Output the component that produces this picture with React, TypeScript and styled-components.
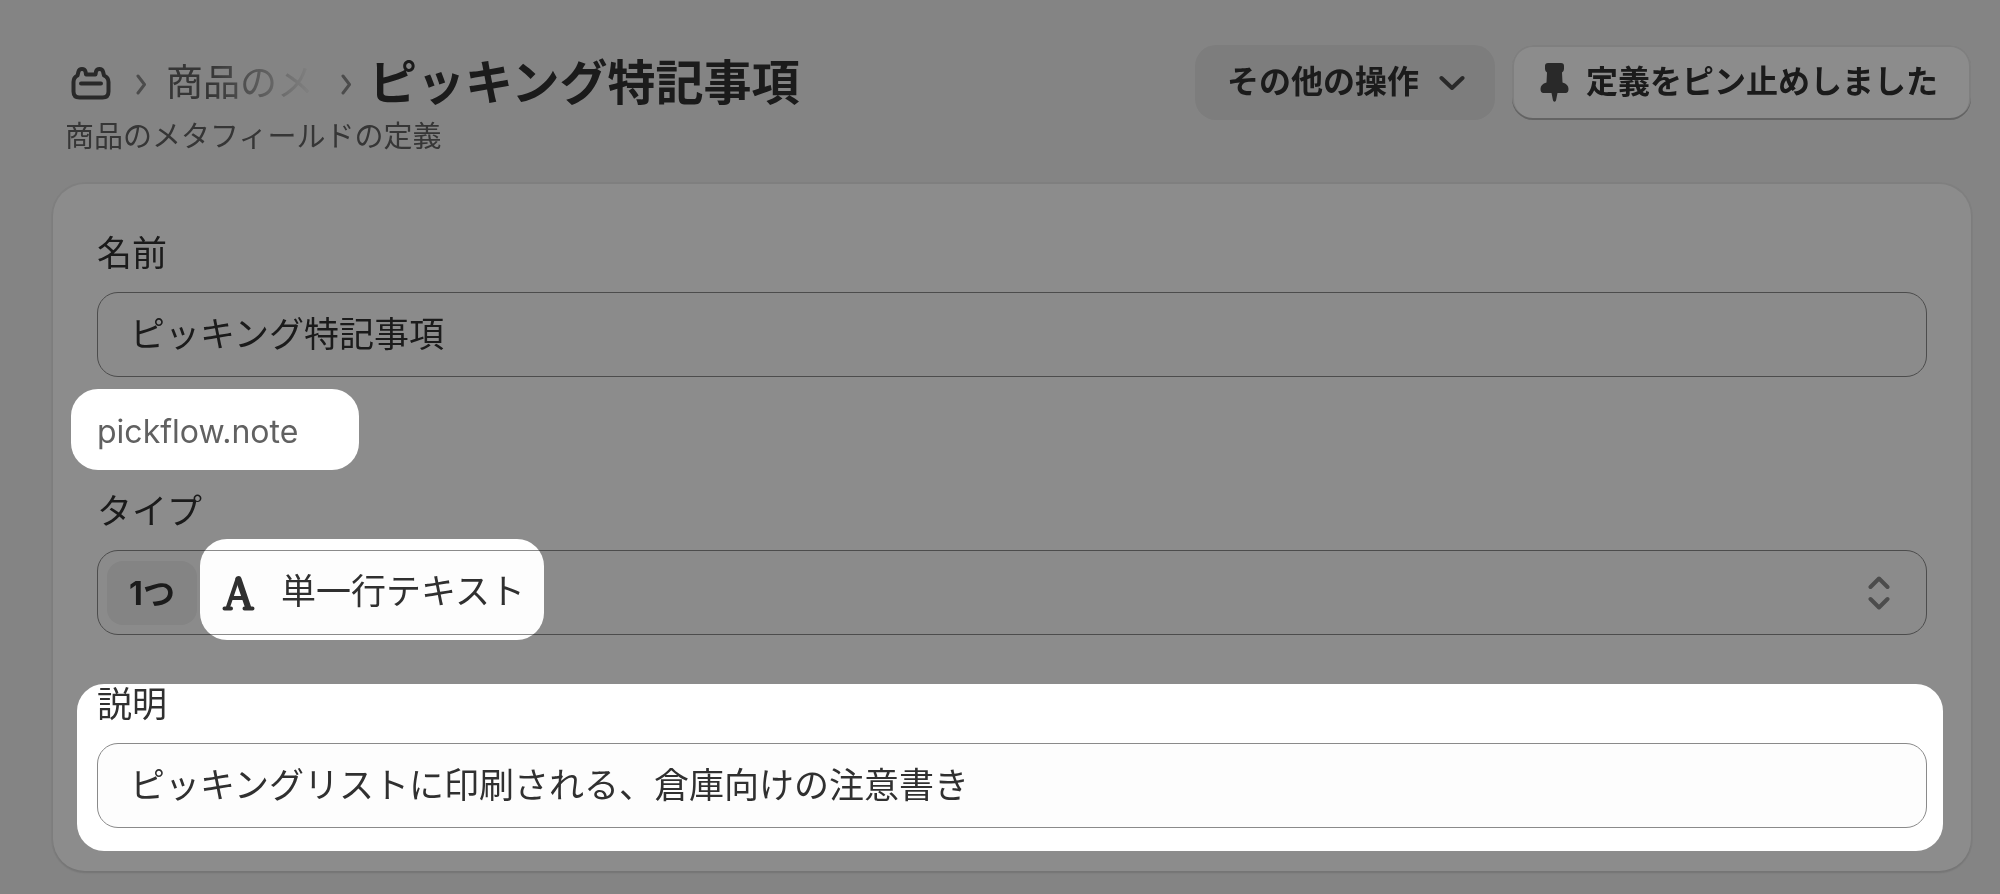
import React from "react";
import styled, { createGlobalStyle } from "styled-components";

const GlobalStyle = createGlobalStyle`
  * { box-sizing: border-box; }
  body {
    margin: 0;
    background: #858585;
    color: #303030;
    font-family: Inter, "Noto Sans CJK JP", sans-serif;
  }
  button, input, select { font: inherit; color: inherit; }
`;

const Page = styled.main`
  position: relative;
  min-height: 100vh;
  background: #f1f1f1;
  padding: 45px 29px 23px 53px;
`;

const Header = styled.header`
  display: flex;
  justify-content: space-between;
  align-items: flex-start;
  min-height: 139px;
`;

const Heading = styled.div`
  padding-left: 12px;
`;

const Breadcrumbs = styled.nav`
  display: flex;
  align-items: center;
  height: 75px;
  color: #616161;
`;

const HomeLink = styled.a`
  display: flex;
  padding: 0 24px 0 6px;
  color: #4a4a4a;
`;

const CrumbLink = styled.a`
  margin: 0 26px 0 18px;
  white-space: nowrap;
  color: inherit;
  text-decoration: none;
  font-size: 37px;
  line-height: 56px;
  mask-image: linear-gradient(90deg, #000 30%, transparent 100%);
`;

const Title = styled.h1`
  margin: 0 0 0 16px;
  font-size: 48px;
  line-height: 64px;
  font-weight: 700;
  color: #303030;
  white-space: nowrap;
`;

const Subtitle = styled.p`
  margin: 0;
  font-size: 29px;
  line-height: 34px;
  color: #616161;
`;

const Actions = styled.div`
  display: flex;
  gap: 17px;
`;

const Button = styled.button<{ $raised?: boolean }>`
  display: flex;
  align-items: center;
  height: 75px;
  padding: ${(p) => (p.$raised ? "0 33px 2px 28px" : "0 30px 2px 32px")};
  gap: ${(p) => (p.$raised ? 17 : 20)}px;
  border: 0;
  border-radius: 21px;
  font-size: 32px;
  line-height: 43px;
  font-weight: 600;
  white-space: nowrap;
  background: ${(p) => (p.$raised ? "#ffffff" : "#e3e3e3")};
  ${(p) =>
    p.$raised &&
    "box-shadow: inset 0 -2px 0 #b5b5b5, inset 0 0 0 2px #e8e8e8;"}
`;

const Card = styled.section`
  display: flex;
  flex-direction: column;
  padding: 43px 44px;
  border-radius: 32px;
  background: #ffffff;
  box-shadow: 0 2px 2px #d4d4d4, 0 0 0 2px #e8e8e8;
`;

const Field = styled.div<{ $spaced?: boolean }>`
  display: flex;
  flex-direction: column;
  gap: 12px;
  margin-top: ${(p) => (p.$spaced ? 43 : 0)}px;
`;

const Label = styled.label`
  font-size: 35px;
  line-height: 53px;
`;

const TextInput = styled.input`
  width: 100%;
  height: 85px;
  padding: 0 32px 6px;
  border: 1px solid #8a8a8a;
  border-radius: 21px;
  background: #fdfdfd;
  font-size: 35px;
`;

const HelpText = styled.p`
  margin: 28px 0 27px;
  font-size: 32px;
  line-height: 53px;
  color: #616161;
`;

const SelectFrame = styled.div`
  display: flex;
  align-items: center;
  height: 85px;
  padding: 0 36px 0 9px;
  border: 1px solid #8a8a8a;
  border-radius: 21px;
  background: #fdfdfd;
`;

const CountButton = styled.button`
  width: 90px;
  height: 64px;
  margin-right: 25px;
  padding: 0 0 4px;
  border: 0;
  border-radius: 16px;
  background: #f0f0f0;
  font-size: 32px;
  font-weight: 700;
`;

const Select = styled.select`
  flex: 1;
  height: 64px;
  margin-left: 26px;
  padding: 0 0 4px;
  border: 0;
  appearance: none;
  background: transparent;
  font-size: 35px;
`;

const Dimmer = styled.div`
  position: absolute;
  inset: 0;
  background: #8c8c8c;
  mix-blend-mode: multiply;
  pointer-events: none;
`;

const Spotlight = styled.div<{ $top: number; $left: number; $height: number; $width?: number; $right?: number }>`
  position: absolute;
  top: ${(p) => p.$top}px;
  left: ${(p) => p.$left}px;
  height: ${(p) => p.$height}px;
  ${(p) => (p.$width ? `width: ${p.$width}px;` : `right: ${p.$right}px;`)}
  border-radius: 27px;
  background: #ffffff;
`;

const CrumbChevron = () => (
  <svg width="13" height="24" viewBox="0 0 13 24" fill="none" stroke="#8a8a8a" strokeWidth="3" strokeLinecap="round" strokeLinejoin="round" aria-hidden="true">
    <path d="M3 5L9.500 13.500 3 22" />
  </svg>
);

const MetafieldIcon = () => (
  <svg width="40" height="34" viewBox="0 0 40 34" fill="none" stroke="currentColor" strokeWidth="4" strokeLinecap="round" strokeLinejoin="round" aria-hidden="true">
    <path d="M6.500 9.500L7.500 5.500Q8.200 3 11 3Q13.800 3 14.500 5.500L15 8.500H24.500L25 5.500Q25.700 3 28.500 3Q31.300 3 32 5.500L33 9.500Q37.500 11.500 37.500 16V25.500Q37.500 31.500 31.500 31.500H8.500Q2.500 31.500 2.500 25.500V16Q2.500 11.500 6.500 9.500Z" />
    <path d="M10 17.500H30" />
  </svg>
);

const ChevronDown = () => (
  <svg width="26" height="16" viewBox="0 0 26 16" fill="none" stroke="#4a4a4a" strokeWidth="4" strokeLinecap="round" strokeLinejoin="round" aria-hidden="true">
    <path d="M2.500 4L13 14 23.500 4" />
  </svg>
);

const PinIcon = () => (
  <svg width="29" height="40" viewBox="0 0 29 40" fill="#4a4a4a" aria-hidden="true">
    <path d="M8 1H21Q24 1 24 4V7Q24 9 22 10.500L22.500 20.500Q28.500 22 28.500 27Q28.500 31 25.500 31H17.500L16 38.500Q14.500 41 13 38.500L11.500 31H3.500Q.5 31 .5 27Q.5 22 6.500 20.500L7 10.500Q5 9 5 7V4Q5 1 8 1Z" />
  </svg>
);

const LetterIcon = () => (
  <svg width="33" height="36" viewBox="0 0 33 36" fill="none" stroke="#303030" strokeLinecap="round" strokeLinejoin="round" aria-hidden="true">
    <path d="M2.500 33.500H9M22.500 33.500H30.500" strokeWidth="4" />
    <path d="M6 32L15.500 4" strokeWidth="4" />
    <path d="M16.500 4L26 32" strokeWidth="6" />
    <path d="M10 23H22" strokeWidth="4" />
  </svg>
);

const SelectArrows = () => (
  <svg width="22" height="34" viewBox="0 0 22 34" fill="none" stroke="#8a8a8a" strokeWidth="4" strokeLinecap="round" strokeLinejoin="round" aria-hidden="true">
    <path d="M2.500 11L11 2.500 19.500 11M2.500 23L11 31.500 19.500 23" />
  </svg>
);

export default function App() {
  return (
    <>
      <GlobalStyle />
      <Page>
        <Header>
          <Heading>
            <Breadcrumbs aria-label="パンくずリスト">
              <HomeLink href="#" aria-label="メタフィールド">
                <MetafieldIcon />
              </HomeLink>
              <CrumbChevron />
              <CrumbLink href="#">商品のメ</CrumbLink>
              <CrumbChevron />
              <Title>ピッキング特記事項</Title>
            </Breadcrumbs>
            <Subtitle>商品のメタフィールドの定義</Subtitle>
          </Heading>
          <Actions>
            <Button type="button">
              その他の操作
              <ChevronDown />
            </Button>
            <Button type="button" $raised>
              <PinIcon />
              定義をピン止めしました
            </Button>
          </Actions>
        </Header>
        <Card>
          <Field>
            <Label htmlFor="name">名前</Label>
            <TextInput id="name" defaultValue="ピッキング特記事項" />
          </Field>
          <HelpText>pickflow.note</HelpText>
          <Field>
            <Label htmlFor="type">タイプ</Label>
            <SelectFrame>
              <CountButton type="button">1つ</CountButton>
              <LetterIcon />
              <Select id="type">
                <option>単一行テキスト</option>
              </Select>
              <SelectArrows />
            </SelectFrame>
          </Field>
          <Field $spaced>
            <Label htmlFor="description">説明</Label>
            <TextInput id="description" defaultValue="ピッキングリストに印刷される、倉庫向けの注意書き" />
          </Field>
        </Card>
        <Dimmer>
          <Spotlight $top={389} $left={71} $width={288} $height={81} />
          <Spotlight $top={539} $left={200} $width={344} $height={101} />
          <Spotlight $top={684} $left={77} $right={57} $height={167} />
        </Dimmer>
      </Page>
    </>
  );
}
